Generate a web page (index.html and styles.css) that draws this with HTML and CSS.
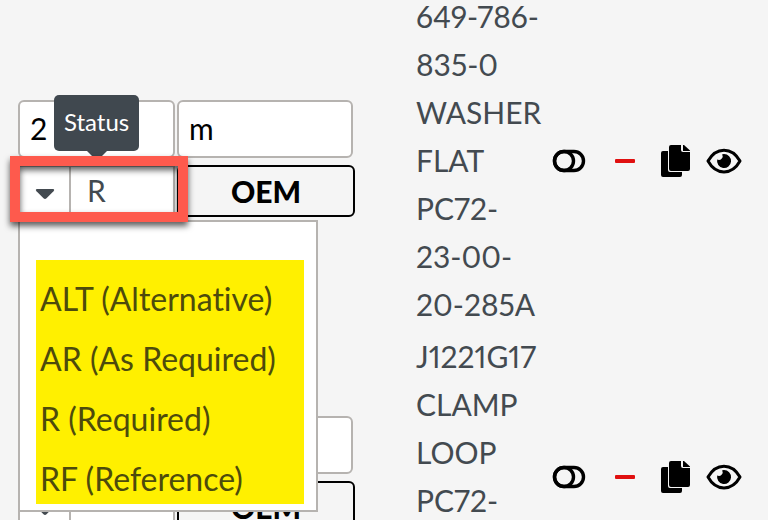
FILE: index.html
```html
<!DOCTYPE html>
<html lang="en">
<head>
<meta charset="utf-8">
<meta name="viewport" content="width=device-width, initial-scale=1">
<title>Parts list</title>
<link rel="stylesheet" href="styles.css">
</head>
<body>
<svg class="sprite" aria-hidden="true">
  <symbol id="toggle" viewBox="0 0 34 24">
    <rect x="2.500" y="2.500" width="29" height="19" rx="9.500" fill="none" stroke="currentColor" stroke-width="3.400"/>
    <circle cx="12" cy="12" r="9.500" fill="none" stroke="currentColor" stroke-width="3.400"/>
  </symbol>
  <symbol id="minus" viewBox="0 0 22 6">
    <rect x="1" y="1" width="20" height="4" rx="1" fill="currentColor"/>
  </symbol>
  <symbol id="copy" viewBox="0 0 30 34">
    <path fill="currentColor" d="M2 7H7V26Q7 28 9 28H21V31Q21 33 19 33H2Q0 33 0 31V9Q0 7 2 7Z"/>
    <path fill="currentColor" d="M10 1H20V6Q20 8 22 8H29V25Q29 27 27 27H10Q8 27 8 25V3Q8 1 10 1Z"/>
    <path fill="currentColor" d="M22 1H23L29 6.500V7H22Z"/>
  </symbol>
  <symbol id="eye" viewBox="0 0 36 26">
    <path d="M2 13C10-1.500 26-1.500 34 13C26 27.500 10 27.500 2 13Z" fill="none" stroke="currentColor" stroke-width="3" stroke-linejoin="round"/>
    <path fill="currentColor" d="M18 6A7 7 0 1 1 11.200 11.500A3.800 3.800 0 0 0 16.200 6.300Q17 6 18 6Z"/>
  </symbol>
  <symbol id="caret" viewBox="0 0 20 12">
    <path fill="currentColor" d="M2 1H18Q20 1.500 18.500 3.300L11.500 10.300Q10 11.600 8.500 10.300L1.500 3.300Q0 1.500 2 1Z"/>
  </symbol>
</svg>

<main class="parts">
  <section class="part">
    <div class="fields">
      <input class="field" type="text" value="2" aria-label="Quantity">
      <input class="field" type="text" value="m" aria-label="Unit">
      <div class="combo">
        <button class="combo-toggle" type="button" aria-label="Open status list" aria-expanded="true"><svg class="caret"><use href="#caret"/></svg></button>
        <input class="combo-value" type="text" value="R" aria-label="Status">
      </div>
      <button class="oem" type="button">OEM</button>
      <div class="tooltip" role="tooltip">Status</div>
      <div class="callout"></div>
      <div class="menu">
        <ul class="options" role="listbox" aria-label="Status">
          <li role="option">ALT (Alternative)</li>
          <li role="option">AR (As Required)</li>
          <li role="option">R (Required)</li>
          <li role="option">RF (Reference)</li>
        </ul>
      </div>
    </div>
    <p class="name">649-786-<br>835-0<br>WASHER<br>FLAT<br>PC72-<br>23-00-<br>20-285A</p>
    <div class="actions">
      <button type="button" aria-label="Toggle"><svg class="icon-toggle"><use href="#toggle"/></svg></button>
      <button type="button" class="remove" aria-label="Remove"><svg class="icon-minus"><use href="#minus"/></svg></button>
      <button type="button" aria-label="Copy"><svg class="icon-copy"><use href="#copy"/></svg></button>
      <button type="button" aria-label="View"><svg class="icon-eye"><use href="#eye"/></svg></button>
    </div>
  </section>

  <section class="part">
    <div class="fields">
      <input class="field" type="text" aria-label="Quantity">
      <input class="field" type="text" aria-label="Unit">
      <div class="combo">
        <button class="combo-toggle" type="button" aria-label="Open status list"><svg class="caret"><use href="#caret"/></svg></button>
        <input class="combo-value" type="text" aria-label="Status">
      </div>
      <button class="oem" type="button">OEM</button>
    </div>
    <p class="name">J1221G17<br>CLAMP<br>LOOP<br>PC72-<br>23-00-<br>20-285A</p>
    <div class="actions">
      <button type="button" aria-label="Toggle"><svg class="icon-toggle"><use href="#toggle"/></svg></button>
      <button type="button" class="remove" aria-label="Remove"><svg class="icon-minus"><use href="#minus"/></svg></button>
      <button type="button" aria-label="Copy"><svg class="icon-copy"><use href="#copy"/></svg></button>
      <button type="button" aria-label="View"><svg class="icon-eye"><use href="#eye"/></svg></button>
    </div>
  </section>
</main>
</body>
</html>
```
FILE: styles.css
```css
* {
  box-sizing: border-box;
}

body {
  margin: 0;
  height: 100vh;
  overflow: hidden;
  background: #f5f5f5;
  color: #434a50;
  font: 30px/48px Lato, "Liberation Sans", sans-serif;
  font-variant-ligatures: none;
}

button,
input {
  margin: 0;
  padding: 0;
  font: inherit;
  color: #000;
}

button {
  border: 0;
  background: none;
}

svg {
  display: block;
}

.sprite {
  position: absolute;
  width: 0;
  height: 0;
}

/* The list is scrolled slightly past its first line */
.parts {
  display: grid;
  gap: 4px;
  margin-top: -8px;
  padding: 0 26px 0 18px;
}

.part {
  display: grid;
  grid-template-columns: 1fr 136px 190px;
  align-items: center;
}

.fields {
  position: relative;
  display: grid;
  grid-template-columns: 157fr 178fr;
  gap: 7px 2px;
  margin-right: 61px;
  padding-bottom: 3px;
}

.field {
  width: 100%;
  height: 58px;
  padding: 0 10px 2px;
  border: 2px solid #b6b3b0;
  border-radius: 6px;
  background: #fff;
}

.field:nth-child(2) {
  width: calc(100% - 2px);
}

.combo {
  display: flex;
  height: 52px;
  border: 2px solid #b6b3b0;
  background: #fff;
}

.combo-toggle {
  display: grid;
  place-items: center;
  flex: none;
  width: 51px;
  padding-top: 6px;
  border-right: 2px solid #b6b3b0;
  color: #434a50;
}

.combo-value {
  min-width: 0;
  width: 100%;
  padding: 0 0 2px 16px;
  border: 0;
  background: none;
  color: #434a50;
}

.caret {
  width: 20px;
  height: 12px;
}

.oem {
  height: 52px;
  padding-bottom: 2px;
  border: 2px solid #000;
  border-radius: 6px;
  font-weight: 900;
}

.name {
  margin: 0;
  white-space: nowrap;
  font-variant-numeric: proportional-nums;
}

.tooltip {
  position: absolute;
  top: -5px;
  left: 36px;
  padding: 3px 10px 5px;
  border-radius: 5px;
  background: #40484f;
  color: #fff;
  font-size: 24px;
}

.tooltip::after {
  content: "";
  position: absolute;
  top: 100%;
  left: 50%;
  margin-left: -10px;
  border: 10px solid transparent;
  border-top-color: #40484f;
  border-bottom: 0;
}

.callout {
  position: absolute;
  top: 56px;
  left: -8px;
  width: 178px;
  height: 66px;
  border: 10px solid #fe5a4d;
  filter: drop-shadow(0 4px 3px rgb(0 0 0 / 65%));
  pointer-events: none;
  z-index: 3;
}

.menu {
  position: absolute;
  top: 120px;
  left: 0;
  z-index: 2;
  width: 300px;
  padding: 38px 12px 6px 16px;
  border: 2px solid #b6b3b0;
  background: #fff;
}

.options {
  display: grid;
  gap: 20px;
  margin: 0;
  padding: 19px 4px 5px;
  list-style: none;
  background: #fff000;
  color: #4d4b0c;
  font-size: 32px;
  line-height: 40px;
}

.actions {
  display: flex;
  align-items: center;
  justify-content: space-between;
  padding-top: 2px;
}

.remove {
  padding: 0 12px 0 16px;
  color: #e01010;
}

.icon-toggle {
  width: 34px;
  height: 24px;
}

.icon-minus {
  width: 22px;
  height: 6px;
}

.icon-copy {
  width: 30px;
  height: 34px;
  margin-right: 3px;
}

.icon-eye {
  width: 36px;
  height: 26px;
}
```
